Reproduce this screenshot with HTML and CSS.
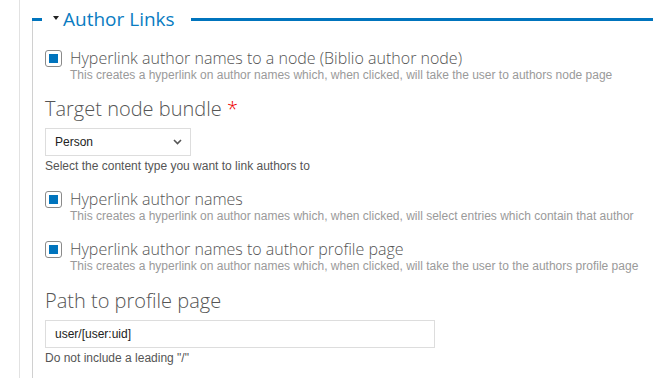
FILE: index.html
```html
<!DOCTYPE html>
<html lang="en">

<head>
    <meta charset="UTF-8">
    <title>Author Links</title>
    <link rel="stylesheet" href="styles.css">
</head>

<body>
    <div class="page">
        <div class="fieldset">
            <div class="legend">
                <span class="legend-dash"></span>
                <span class="legend-arrow"></span>
                <span class="legend-title">Author Links</span>
                <span class="legend-line"></span>
            </div>

            <div class="fieldset-body">
                <!-- Link to biblio author node -->
                <div class="check-item first">
                    <span class="checkbox"><span class="checkbox-mark"></span></span>
                    <div class="check-text">
                        <div class="check-label">Hyperlink author names to a node (Biblio author node)</div>
                        <div class="check-desc">This creates a hyperlink on author names which, when clicked, will take the user to authors node page</div>
                    </div>
                </div>

                <div class="field">
                    <div class="field-title">Target node bundle <span class="required">*</span></div>
                    <div class="select">
                        <span>Person</span>
                        <svg class="chevron" width="9" height="6" viewBox="0 0 9 6">
                            <path d="M1 1 L4.5 4.5 L8 1" fill="none" stroke="#555" stroke-width="1.6"/>
                        </svg>
                    </div>
                    <div class="field-help">Select the content type you want to link authors to</div>
                </div>

                <div class="check-item">
                    <span class="checkbox"><span class="checkbox-mark"></span></span>
                    <div class="check-text">
                        <div class="check-label">Hyperlink author names</div>
                        <div class="check-desc">This creates a hyperlink on author names which, when clicked, will select entries which contain that author</div>
                    </div>
                </div>

                <div class="check-item">
                    <span class="checkbox"><span class="checkbox-mark"></span></span>
                    <div class="check-text">
                        <div class="check-label">Hyperlink author names to author profile page</div>
                        <div class="check-desc">This creates a hyperlink on author names which, when clicked, will take the user to the authors profile page</div>
                    </div>
                </div>

                <div class="field path">
                    <div class="field-title">Path to profile page</div>
                    <input class="text-input" type="text" value="user/[user:uid]">
                    <div class="field-help">Do not include a leading "/"</div>
                </div>
            </div>
        </div>
    </div>
</body>

</html>
```

FILE: styles.css
```css
body {
    margin: 0;
    padding: 0;
    background: #fff;
    color: #444;
    font-family: 'Open Sans', 'Liberation Sans', sans-serif;
    overflow: hidden;
}

.page {
    margin-left: 19px;
    border-left: 1px solid #e2e2e2;
    padding-left: 12px;
    height: 378px;
    display: flex;
    flex-direction: column;
}

.fieldset {
    padding-top: 19px;
    flex: 1;
    display: flex;
    flex-direction: column;
}

/* Legend row: dash, arrow, title, long rule */
.legend {
    display: flex;
    align-items: center;
    height: 24px;
    margin-top: -12px;
    margin-bottom: -12px;
    position: relative;
}

.legend-dash {
    width: 10px;
    height: 3px;
    background: #0074bd;
    margin-top: 1px;
}

.legend-arrow {
    width: 0;
    height: 0;
    border-left: 3px solid transparent;
    border-right: 3px solid transparent;
    border-top: 4px solid #222;
    margin-left: 11px;
    margin-right: 4px;
    margin-top: -2px;
}

.legend-title {
    color: #0a7cc2;
    font-size: 19px;
    line-height: 24px;
}

.legend-line {
    flex: 1;
    height: 3px;
    background: #0074bd;
    margin-left: 16px;
    margin-top: 1px;
}

.fieldset-body {
    flex: 1;
    border-left: 1px solid #d0d0d0;
    padding: 30px 0 0 12px;
}

/* Checkbox rows */
.check-item {
    display: flex;
    align-items: flex-start;
    margin-top: 16px;
}

.check-item.first {
    margin-top: 0;
}

.checkbox {
    width: 15px;
    height: 15px;
    border: 1px solid #8a8a8a;
    border-radius: 3px;
    display: flex;
    align-items: center;
    justify-content: center;
    margin-top: 1px;
    margin-right: 8px;
    flex-shrink: 0;
}

.checkbox-mark {
    width: 9px;
    height: 9px;
    background: #0074bd;
}

.check-label {
    font-size: 16px;
    font-weight: 300;
    line-height: 18px;
    color: #555;
}

.check-desc {
    font-family: 'Liberation Sans', Arial, sans-serif;
    font-size: 12px;
    line-height: 15px;
    color: #9a9a9a;
    margin-top: 1px;
}

/* Titled fields */
.field {
    margin-top: 13px;
}

.field-title {
    font-size: 20px;
    font-weight: 300;
    line-height: 26px;
    color: #555;
    margin-bottom: 6px;
}

.required {
    color: #e00;
}

.select {
    width: 127px;
    height: 26px;
    border: 1px solid #ddd;
    display: flex;
    align-items: center;
    justify-content: space-between;
    padding: 0 8px 0 9px;
    font-family: 'Liberation Sans', Arial, sans-serif;
    font-size: 12px;
    color: #222;
}

.field-help {
    font-family: 'Liberation Sans', Arial, sans-serif;
    font-size: 12px;
    line-height: 15px;
    color: #555;
    margin-top: 3px;
}

.field.path {
    margin-top: 14px;
}

.text-input {
    box-sizing: border-box;
    width: 390px;
    height: 28px;
    border: 1px solid #ddd;
    padding: 0 9px;
    font-family: 'Liberation Sans', Arial, sans-serif;
    font-size: 12px;
    color: #222;
    outline: none;
    display: block;
}
```
